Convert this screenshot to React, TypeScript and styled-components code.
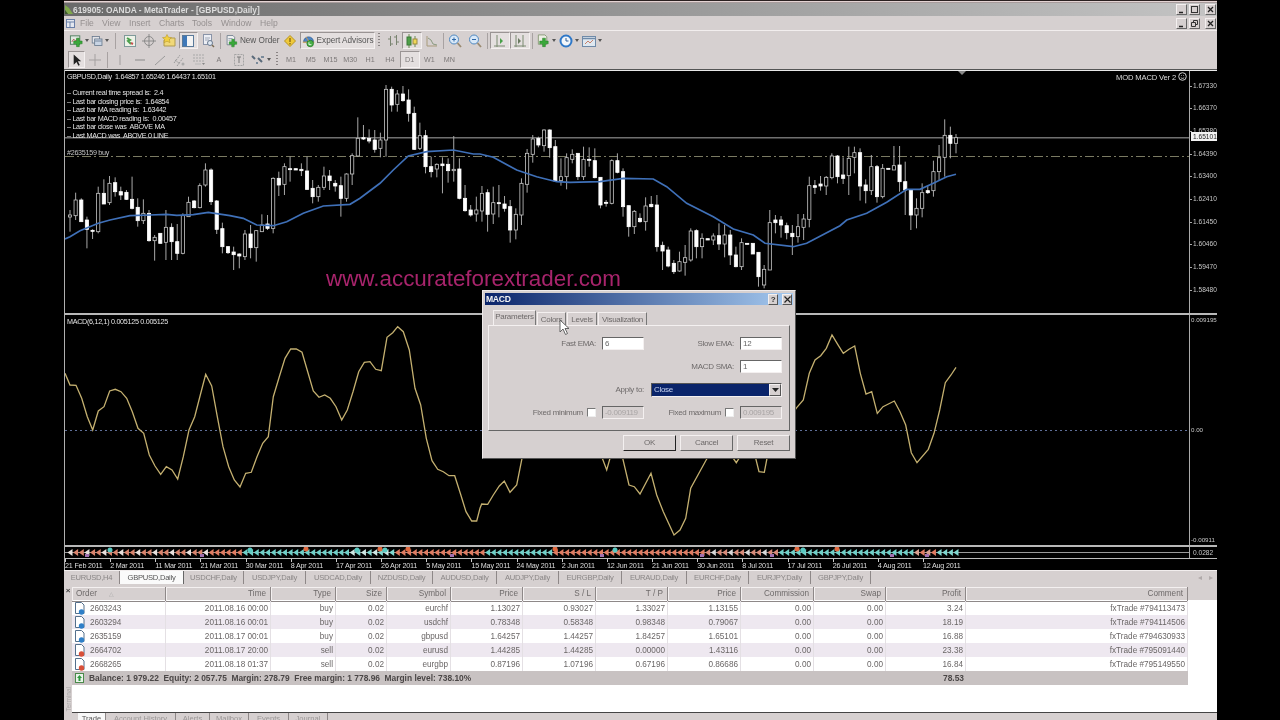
import React from "react";
import styled, { createGlobalStyle } from "styled-components";

const FACE = "#d6d0d0";
const FONT = `"Liberation Sans", Arial, sans-serif`;

// candles read off the chart, values are 3x pixels from y=70: high, low, body top, body bottom, filled
const CANDLES: number[][] = [
  [420,485,435,441,0],[368,450,390,437,0],[385,455,390,455,1],[440,535,450,478,1],[478,507,481,484,1],[350,490,370,485,0],
  [328,402,370,402,1],[318,405,340,398,0],[322,380,338,365,1],[350,390,365,375,1],[360,390,367,388,1],[320,418,388,415,1],
  [385,470,412,452,1],[388,462,430,452,0],[420,515,430,512,1],[495,572,502,512,0],[490,520,490,520,1],[420,570,472,517,0],
  [460,570,472,515,1],[462,570,515,550,1],[430,553,437,550,0],[380,440,397,440,0],[390,415,393,413,1],[340,415,347,413,0],
  [280,350,300,345,0],[295,405,300,395,1],[390,492,393,478,1],[458,550,476,530,1],[528,552,530,548,1],[530,600,546,554,1],
  [550,595,552,558,1],[480,570,492,560,0],[465,565,492,533,1],[480,575,482,533,0],[433,485,465,485,0],[435,480,462,475,1],
  [322,490,325,475,0],[305,378,325,345,1],[280,375,290,343,0],[260,335,296,298,1],[296,300,296,300,1],[280,318,298,302,1],
  [260,360,303,358,1],[330,400,355,380,1],[345,395,352,380,0],[290,360,318,352,0],[300,360,318,332,1],[330,365,340,348,1],
  [320,440,347,385,1],[310,395,312,385,0],[250,345,257,312,0],[142,260,205,258,0],[165,210,203,207,1],[178,220,205,213,1],
  [180,248,210,238,1],[188,262,210,235,0],[45,260,58,210,0],[50,125,58,105,1],[60,125,72,103,0],[48,95,72,92,1],
  [58,155,90,130,1],[110,240,130,238,1],[158,240,197,235,0],[180,310,197,290,1],[260,322,290,305,1],[280,322,283,297,0],
  [262,370,282,287,1],[265,338,283,302,1],[198,335,298,302,0],[265,388,297,385,1],[345,425,385,422,1],[405,440,420,435,1],
  [380,455,420,432,0],
  [348,455,370,423,0],[358,485,368,433,1],[350,462,398,432,0],[345,442,398,400,1],[378,425,402,415,1],[390,518,410,480,1],
  [415,508,433,480,0],[325,465,340,435,0],[237,368,250,343,0],[195,278,207,253,0],[200,232,205,225,1],[178,245,180,227,0],
  [178,263,180,233,1],[210,335,230,333,1],[265,347,320,332,0],[250,358,263,320,0],[238,280,253,268,0],[250,330,250,320,1],
  [230,330,268,320,0],[232,290,268,270,1],[235,325,272,323,1],[322,415,322,405,1],[390,410,397,399,1],[268,403,272,400,0],
  [250,310,272,307,1],[295,440,305,410,1],[407,500,407,470,1],[420,492,424,470,0],[430,458,445,455,1],[382,482,408,455,0],
  [378,412,403,410,1],[375,545,405,530,1],[515,600,526,543,1],[530,592,540,588,1],[570,612,580,605,1],[545,605,575,603,0],
  [525,617,563,577,0],[475,575,483,570,0],[478,565,482,530,1],[490,565,505,530,0],[506,510,506,510,1],[490,525,498,510,0],
  [460,540,497,522,1],[465,562,495,522,0],[480,585,495,555,1],[530,592,555,590,1],[505,600,518,590,0],[520,523,520,523,1],
  [520,552,520,552,1],[547,650,547,620,1],[585,655,598,645,0],[420,600,458,600,0],[435,490,450,458,1],[438,503,450,465,1],
  [458,508,467,488,1],[465,555,490,500,1],[432,518,470,500,0],[432,510,447,472,0],[320,472,347,448,0],[330,372,347,352,1],
  [318,362,342,348,1],[318,375,322,348,0],[250,328,258,323,0],[255,340,258,320,1],
  [262,342,315,325,1],[230,375,265,317,0],[230,310,248,262,0],[235,392,248,348,1],[328,400,345,362,1],[255,375,290,362,0],
  [285,398,290,380,1],[282,385,295,380,0],[295,297,295,297,1],[228,300,287,300,0],[228,365,285,335,1],[275,435,335,360,1],
  [360,480,360,435,1],[385,475,415,435,0],[340,442,368,415,0],[345,372,362,368,1],[272,380,305,362,0],[225,332,263,305,0],
  [148,320,196,262,0],[170,265,196,220,1],[192,250,203,220,0],
];

const BAR_STEP = (956 - 70) / (CANDLES.length - 1);

const scale = (pts: number[], ox: number, oy: number) => {
  const out: string[] = [];
  for (let i = 0; i < pts.length; i += 2) {
    out.push(`${(pts[i] / 3 + ox).toFixed(1)},${(pts[i + 1] / 3 + oy).toFixed(1)}`);
  }
  return out.join(" ");
};

const MA_LINE = [
  scale([15,507,30,500,60,482,115,460,150,450,210,437,270,435,320,433,350,436,400,434,445,427,510,437,550,445,590,465,640,467,680,455,730,430,790,408,870,403,900,385,960,340,1000,300,1045,258,1100,245,1180,240,1240,252], 60, 70),
  scale([120,252,160,262,230,300,290,320,350,335,390,337,480,335,550,325,640,327,680,350,740,400,820,440,880,477,940,495,975,520,1060,530,1100,520,1200,467], 440, 70),
  scale([200,450,260,430,320,397,380,358,420,358,460,340,500,320,528,313], 780, 70),
].join(" ");

const MACD_LINE = [
  scale([15,190,30,225,48,226,65,265,82,320,98,360,115,303,132,290,149,243,166,238,183,245,200,265,217,305,234,355,251,370,268,435,285,468,302,493,319,470,336,480,353,507,370,440,387,360,404,320,421,255,437,193,455,228,472,320,489,410,506,470,523,510,540,531,557,490,574,487,591,440,608,400,625,380,640,260,658,200,675,145,692,117,709,117,726,127,743,185,760,243,777,262,794,255,811,265,828,290,845,330,862,300,879,245,896,185,913,157,930,155,947,178,964,182,981,82,998,68,1013,50,1030,65,1048,120,1065,235,1082,285,1099,385,1116,452,1133,478,1150,485,1167,497,1184,497,1201,550,1218,605,1235,633,1250,633,1260,595], 60, 310),
  scale([125,582,143,583,160,555,178,528,193,513,210,547,230,525,246,445,270,300,350,300,470,400,487,445,500,480,510,445,530,420,548,445,567,525,583,530,600,552,633,490,650,555,670,605,702,675,720,660,737,625,752,535,800,447,840,400,880,445,889,458,897,445,920,420,947,445,957,485,973,487,981,445,1030,350,1070,293], 440, 310),
  scale([70,270,88,190,105,150,122,137,139,115,156,75,173,103,190,130,207,118,224,108,241,190,258,252,275,245,292,310,309,290,343,273,360,305,377,345,394,428,411,458,445,418,462,370,479,300,496,218,513,195,528,172], 780, 310),
].join(" ");

const markerColor = (x: number, i: number) => {
  if (x < 207) return i % 3 === 0 ? "#e8e0dc" : "#d9836c";
  if (x < 237) return "#e07c62";
  if (x < 347) return "#6fd0c8";
  if (x < 393) return i % 2 ? "#7fd8d0" : "#cfe8e4";
  if (x < 480) return "#e07c62";
  if (x < 548) return "#6fd0c8";
  if (x < 705) return "#e07c62";
  if (x < 773) return i % 3 ? "#d88a78" : "#d8d8d8";
  if (x < 910) return "#6fd0c8";
  if (x < 935) return i % 2 ? "#e07c62" : "#d8a090";
  return "#7fd8d0";
};

const TABS = [
  { label: "EURUSD,H4", w: 56 },
  { label: "GBPUSD,Daily", w: 64, active: true },
  { label: "USDCHF,Daily", w: 60 },
  { label: "USDJPY,Daily", w: 62 },
  { label: "USDCAD,Daily", w: 65 },
  { label: "NZDUSD,Daily", w: 62 },
  { label: "AUDUSD,Daily", w: 64 },
  { label: "AUDJPY,Daily", w: 62 },
  { label: "EURGBP,Daily", w: 63 },
  { label: "EURAUD,Daily", w: 65 },
  { label: "EURCHF,Daily", w: 62 },
  { label: "EURJPY,Daily", w: 62 },
  { label: "GBPJPY,Daily", w: 60 },
];

const DATES = [
  "21 Feb 2011","2 Mar 2011","11 Mar 2011","21 Mar 2011","30 Mar 2011","8 Apr 2011","17 Apr 2011","26 Apr 2011","5 May 2011","15 May 2011",
  "24 May 2011","2 Jun 2011","12 Jun 2011","21 Jun 2011","30 Jun 2011","8 Jul 2011","17 Jul 2011","26 Jul 2011","4 Aug 2011","12 Aug 2011",
];

const PRICES = ["1.67330","1.66370","1.65380","1.64390","1.63400","1.62410","1.61450","1.60460","1.59470","1.58480"];

const COLS = "94px 105px 65px 51px 64px 72px 73px 72px 73px 73px 72px 80px 222px";

const HEADERS = ["Order","Time","Type","Size","Symbol","Price","S / L","T / P","Price","Commission","Swap","Profit","Comment"];

const ORDERS = [
  ["2603243","2011.08.16 00:00","buy","0.02","eurchf","1.13027","0.93027","1.33027","1.13155","0.00","0.00","3.24","fxTrade #794113473"],
  ["2603294","2011.08.16 00:01","buy","0.02","usdchf","0.78348","0.58348","0.98348","0.79067","0.00","0.00","18.19","fxTrade #794114506"],
  ["2635159","2011.08.17 00:01","buy","0.02","gbpusd","1.64257","1.44257","1.84257","1.65101","0.00","0.00","16.88","fxTrade #794630933"],
  ["2664702","2011.08.17 20:00","sell","0.02","eurusd","1.44285","1.44285","0.00000","1.43116","0.00","0.00","23.38","fxTrade #795091440"],
  ["2668265","2011.08.18 01:37","sell","0.02","eurgbp","0.87196","1.07196","0.67196","0.86686","0.00","0.00","16.84","fxTrade #795149550"],
];

const STATS = [
  "– Current real time spread is:  2.4",
  "– Last bar closing price is:  1.64854",
  "– Last bar MA reading is:  1.63442",
  "– Last bar MACD reading is:  0.00457",
  "– Last bar close was  ABOVE MA",
  "– Last MACD was  ABOVE 0 LINE",
];

const I = ({ children, w = 16 }: { children: React.ReactNode; w?: number }) => (
  <svg width={w} height="16" viewBox={`0 0 ${w} 16`} fill="none">{children}</svg>
);

const Plus = ({ x = 8, y = 7 }: { x?: number; y?: number }) => (
  <path d={`M${x} ${y - 2}h3v3h3v3h-3v3h-3v-3h-3v-3h3z`} fill="#3aa83a" stroke="#1e7a1e" strokeWidth=".5" />
);

const icons: Record<string, React.ReactNode> = {
  newChart: <I><rect x="1.5" y="2.5" width="10" height="9" fill="#dfe8e0" stroke="#4f7f5f" /><path d="M3 9l2-3 2 2 3-3" stroke="#b05050" /><Plus x={8} y={7} /></I>,
  profiles: <I><rect x="1.5" y="2.5" width="9" height="8" fill="#e4e4e8" stroke="#66788c" /><rect x="4.5" y="5.5" width="9" height="8" fill="#c8d4e4" stroke="#66788c" /><path d="M5 8h8" stroke="#66788c" /></I>,
  market: <I><rect x="2.5" y="2.5" width="11" height="11" fill="#eef2e8" stroke="#7f9a9a" /><path d="M5 5l3 2-2 1 3 3" stroke="#4da04d" strokeWidth="2" /><path d="M9 10l2 1" stroke="#c85050" strokeWidth="2" /></I>,
  crosshair: <I><circle cx="8" cy="8" r="4.5" stroke="#8a8a8a" /><path d="M8 1v14M1 8h14" stroke="#8a8a8a" /></I>,
  navigator: <I><path d="M3 7h5l1-2h5v8H3z" fill="#f0d878" stroke="#b09a50" /><path d="M6 1.500l1.500 2.800 3 .3-2.200 2 .7 3L6 8.200l-3 1.400.7-3-2.200-2 3-.3z" fill="#f2d040" stroke="#b89a30" strokeWidth=".6" /></I>,
  terminal: <I><rect x="2.5" y="2.5" width="11" height="11" fill="#f4f4f4" stroke="#5a7a9a" /><rect x="3" y="3" width="4" height="10" fill="#3f78b8" /></I>,
  tester: <I><rect x="3.5" y="1.5" width="8" height="10" fill="#eceef4" stroke="#8a94a8" /><path d="M5 5h5M5 7h4" stroke="#a0a8b8" /><circle cx="10" cy="10" r="2.5" fill="#dfe8f2" stroke="#6a7a90" /><path d="M12 12l2 2" stroke="#7a6a50" strokeWidth="1.5" /></I>,
  order: <I><path d="M2.500 1.500h7l2 2v9h-9z" fill="#f2f2f2" stroke="#6a7a8a" /><path d="M4 5h5M4 7h3" stroke="#8a9aaa" /><Plus x={8} y={8} /></I>,
  alert: <I><path d="M8 2.500l5.500 5.500L8 13.500 2.500 8z" fill="#efc93a" stroke="#b89420" /><path d="M8 5v4M8 10v1.500" stroke="#7a5a10" strokeWidth="1.200" /></I>,
  expert: <I><path d="M2 9a6 6 0 0 1 12 0z" fill="#4f86c6" stroke="#2f5f96" /><path d="M1 9.500h14" stroke="#c8a060" strokeWidth="1.500" /><circle cx="10" cy="11" r="4" fill="#48b048" stroke="#2a7a2a" /><path d="M8.500 9.500v3h3" stroke="#fff" /><path d="M5 3l3 5" stroke="#d89a40" /></I>,
  bars: <I><path d="M5.500 3v10M3 6h2.500M5.500 11H8M11.500 2v10M9 4h2.500M11.500 9H14" stroke="#7a8470" /></I>,
  candles: <I><path d="M5 1v14M11 3v11" stroke="#6a8a50" /><rect x="3" y="4" width="4" height="8" fill="#4fa048" stroke="#3a7a38" /><rect x="9" y="6" width="4" height="5" fill="#f0d858" stroke="#9a8a40" /></I>,
  line: <I><path d="M3 3v10h10" stroke="#a89a7a" /><path d="M4 5l3 2 2 4 4 1" stroke="#8a9a80" /></I>,
  zoomIn: <I><circle cx="7" cy="6.500" r="4.500" fill="#d8e8f8" stroke="#4f88c0" /><path d="M5 6.500h4M7 4.500v4" stroke="#2f68a8" /><path d="M10.500 10l3.500 4" stroke="#9a8a70" strokeWidth="1.800" /></I>,
  zoomOut: <I><circle cx="7" cy="6.500" r="4.500" fill="#d8e8f8" stroke="#4f88c0" /><path d="M5 6.500h4" stroke="#2f68a8" /><path d="M10.500 10l3.500 4" stroke="#9a8a70" strokeWidth="1.800" /></I>,
  scroll: <I><path d="M5 2v12M2 13h11" stroke="#7a8a70" /><path d="M8 5l3 3-3 3z" fill="#48a048" /></I>,
  shift: <I><path d="M4 2v12M11 2v12M2 13h12" stroke="#7a8a70" /><path d="M6 5l3 3-3 3z" fill="#6a7a60" /></I>,
  indicator: <I><path d="M2.500 1.500h7l2 2v8h-9z" fill="#eceee4" stroke="#8a9a7a" /><Plus x={7} y={7} /></I>,
  periods: <I><circle cx="8" cy="8" r="5.500" fill="#f2f6fa" stroke="#2f78c8" strokeWidth="2" /><path d="M8 5v3h2.500" stroke="#2f5f96" /></I>,
  templates: <I><rect x="1.500" y="3.500" width="13" height="10" fill="#dfe8f0" stroke="#6f8aa8" /><path d="M2 5.500h12" stroke="#6f8aa8" strokeWidth="1.500" /><path d="M4 11l3-3 2 2 3-3" stroke="#c8806a" /></I>,
  arrow: <I><path d="M5 2v11l3-3 2 4 1.500-.7-2-4H13z" fill="#222" /></I>,
  cross: <I><path d="M8 2v12M2 8h12" stroke="#a4a0a0" /></I>,
  vline: <I><path d="M8 3v10" stroke="#a09c9c" /></I>,
  hline: <I><path d="M3 8h10" stroke="#8a8a8a" /></I>,
  trend: <I><path d="M3 13l10-9" stroke="#9a9a9a" /></I>,
  channel: <I><path d="M3 11l6-8M6 14l6-8M4 8l5 4" stroke="#9a9a9a" strokeDasharray="2 1" /><circle cx="12" cy="12" r="1.500" fill="#aaa" /></I>,
  fibo: <I><path d="M2 3h12M2 6h12M2 9h12" stroke="#a8a8a8" strokeDasharray="2 1" /><path d="M4 12h6" stroke="#b8b8b8" /><path d="M11 11h3l-1.500 2z" fill="#888" /></I>,
  frame: <I><rect x="3.500" y="2.500" width="9" height="11" stroke="#a4a4a4" strokeDasharray="2 1" /><path d="M6 5h4M8 5v6" stroke="#7a7a7a" /></I>,
  arrows: <I><path d="M2 4l3 3M8 6l4 4" stroke="#5a6a7a" strokeWidth="2" /><path d="M11 5h3" stroke="#7a8a9a" strokeWidth="2" /><path d="M6 11h2" stroke="#7a8a9a" strokeWidth="2" /></I>,
};

const ROW_ONE: { icon?: string; w: number; caret?: boolean; active?: boolean; sep?: boolean; grip?: boolean; label?: string }[] = [
  { icon: "newChart", w: 22, caret: true },
  { icon: "profiles", w: 20, caret: true },
  { sep: true, w: 10 },
  { icon: "market", w: 19.5 },
  { icon: "crosshair", w: 19.5 },
  { icon: "navigator", w: 19.5 },
  { icon: "terminal", w: 19.5, active: true },
  { icon: "tester", w: 19.5 },
  { sep: true, w: 5 },
  { icon: "order", w: 58, label: "New Order" },
  { icon: "alert", w: 19 },
  { icon: "expert", w: 75, label: "Expert Advisors", active: true },
  { grip: true, w: 9 },
  { icon: "bars", w: 18 },
  { icon: "candles", w: 20, active: true },
  { icon: "line", w: 20 },
  { sep: true, w: 3 },
  { icon: "zoomIn", w: 20 },
  { icon: "zoomOut", w: 20 },
  { sep: true, w: 5 },
  { icon: "scroll", w: 20, active: true },
  { icon: "shift", w: 20, active: true },
  { sep: true, w: 5 },
  { icon: "indicator", w: 22, caret: true },
  { icon: "periods", w: 23, caret: true },
  { icon: "templates", w: 24, caret: true },
];

const ROW_TWO: typeof ROW_ONE = [
  { icon: "arrow", w: 17, active: true },
  { icon: "cross", w: 20 },
  { sep: true, w: 5 },
  { icon: "vline", w: 20 },
  { icon: "hline", w: 20 },
  { icon: "trend", w: 19 },
  { icon: "channel", w: 20 },
  { icon: "fibo", w: 20 },
  { label: "A", w: 20 },
  { icon: "frame", w: 20 },
  { icon: "arrows", w: 23, caret: true },
  { grip: true, w: 9 },
  { label: "M1", w: 19.8 },
  { label: "M5", w: 19.8 },
  { label: "M15", w: 19.8 },
  { label: "M30", w: 19.8 },
  { label: "H1", w: 19.8 },
  { label: "H4", w: 19.8 },
  { label: "D1", w: 19.8, active: true },
  { label: "W1", w: 19.8 },
  { label: "MN", w: 19.8 },
];

const App = () => (
  <Page>
    <GlobalStyle />
    <TopEdge />
    <TitleBar>
      <svg width="9" height="13" viewBox="0 0 9 13"><path d="M0 2l4 3 4 6H3L0 7z" fill="#7fa84a" /><path d="M0 7l3 4H0z" fill="#3c5a2a" /></svg>
      <TitleText>619905: OANDA - MetaTrader - [GBPUSD,Daily]</TitleText>
      <WinButtons>
        <WinButton><svg width="9" height="9"><path d="M2 7.500h4" stroke="#222" strokeWidth="1.500" /></svg></WinButton>
        <WinButton><svg width="9" height="9"><rect x="1.500" y="1.500" width="6" height="6" fill="none" stroke="#333" /></svg></WinButton>
        <WinButton $gap><svg width="9" height="9"><path d="M2 2l5 5M7 2l-5 5" stroke="#222" strokeWidth="1.300" /></svg></WinButton>
      </WinButtons>
    </TitleBar>
    <MenuBar>
      <svg width="9" height="11" viewBox="0 0 9 11"><rect x=".5" y="1.500" width="8" height="8" fill="#e4e8f0" stroke="#6a80a8" /><path d="M1 4h7M4 4v5" stroke="#6a80a8" /></svg>
      <MenuItem $w={22}>File</MenuItem>
      <MenuItem $w={27}>View</MenuItem>
      <MenuItem $w={30}>Insert</MenuItem>
      <MenuItem $w={33}>Charts</MenuItem>
      <MenuItem $w={29}>Tools</MenuItem>
      <MenuItem $w={39}>Window</MenuItem>
      <MenuItem $w={24}>Help</MenuItem>
      <WinButtons>
        <WinButton><svg width="9" height="9"><path d="M2 7.500h4" stroke="#222" strokeWidth="1.500" /></svg></WinButton>
        <WinButton><svg width="9" height="9"><path d="M3.500 3V1.500h4v4H6M1.500 3.500h4v4h-4z" fill="none" stroke="#333" /></svg></WinButton>
        <WinButton $gap><svg width="9" height="9"><path d="M2 2l5 5M7 2l-5 5" stroke="#222" strokeWidth="1.300" /></svg></WinButton>
      </WinButtons>
    </MenuBar>
    <Toolbar>
      {ROW_ONE.map((t, i) => <ToolSlot key={i} tool={t} />)}
    </Toolbar>
    <Toolbar>
      {ROW_TWO.map((t, i) => <ToolSlot key={i} tool={t} small />)}
    </Toolbar>

    <Chart>
      <Pane $h={242}>
        <Plot>
          <svg width="1124" height="242" viewBox="65 71 1124 242" style={{ display: "block" }}>
            <line x1="65" x2="1189" y1="137.700" y2="137.700" stroke="#707070" strokeWidth="1.500" />
            <line x1="65" x2="1189" y1="156.500" y2="156.500" stroke="#7a7a62" strokeDasharray="9 3 2 3" />
            {CANDLES.map((c, i) => {
              const x = 70 + i * BAR_STEP;
              const top = 70 + c[2] / 3;
              const h = Math.max((c[3] - c[2]) / 3, 1);
              return (
                <g key={i}>
                  <line x1={x} x2={x} y1={70 + c[0] / 3} y2={70 + c[1] / 3} stroke="#a8a8a8" />
                  <rect x={x - 1.6} y={top} width="3.2" height={h} fill={c[4] ? "#fff" : "#000"} stroke={c[4] ? "#fff" : "#c8c8c8"} strokeWidth=".8" />
                </g>
              );
            })}
            <polyline points={MA_LINE} fill="none" stroke="#3f70b8" strokeWidth="1.700" />
          </svg>
          <InfoText $top={1}>GBPUSD,Daily&nbsp; 1.64857 1.65246 1.64437 1.65101</InfoText>
          <StatsBlock>
            {STATS.map((s) => <div key={s}>{s}</div>)}
          </StatsBlock>
          <InfoText $top={77} $dim>#2635159 buy</InfoText>
          <ExpertName>MOD MACD Ver 2 <Smiley /></ExpertName>
          <ShiftMark />
          <Watermark>www.accurateforextrader.com</Watermark>
        </Plot>
        <PriceAxis>
          {PRICES.map((p) => <PriceLabel key={p}>{p}</PriceLabel>)}
          <CurrentPrice>1.65101</CurrentPrice>
        </PriceAxis>
      </Pane>
      <PaneDivider />
      <Pane $h={230}>
        <Plot>
          <svg width="1124" height="230" viewBox="65 315 1124 230" style={{ display: "block" }}>
            <line x1="65" x2="1189" y1="430.500" y2="430.500" stroke="#5f6f98" strokeDasharray="2 3" />
            <polyline points={MACD_LINE} fill="none" stroke="#c4b070" strokeWidth="1.300" />
          </svg>
          <InfoText $top={2}>MACD(6,12,1) 0.005125 0.005125</InfoText>
        </Plot>
        <MacdAxis>
          <span>0.009195</span>
          <span>0.00</span>
          <span>-0.00911</span>
        </MacdAxis>
      </Pane>
      <PaneDivider />
      <Pane $h={11}>
        <Plot>
          <svg width="1124" height="11" viewBox="65 547 1124 11" style={{ display: "block" }}>
            <line x1="65" x2="1189" y1="552.500" y2="552.500" stroke="#999" />
            {CANDLES.map((_, i) => {
              const x = 67.500 + i * BAR_STEP;
              return <path key={i} d={`M${x} 552.500l5-3.500v7z`} fill={markerColor(x, i)} />;
            })}
            {[306, 380, 408, 555, 797, 837].map((x) => <circle key={x} cx={x} cy="549" r="2.500" fill="#e0683e" />)}
            {[357, 385, 803, 110, 250, 615].map((x) => <circle key={x} cx={x} cy="550" r="2.500" fill="#58c8c0" />)}
            {[85, 200, 450, 600, 700, 770, 890, 925].map((x) => <rect key={x} x={x} y="554" width="4" height="3" fill="#a070b0" />)}
          </svg>
        </Plot>
        <StripAxis>0.0282</StripAxis>
      </Pane>
      <DateAxis>
        {DATES.map((d) => <DateCell key={d}>{d}</DateCell>)}
      </DateAxis>
    </Chart>

    <ChartTabs>
      {TABS.map((t) => <ChartTab key={t.label} $w={t.w} $active={t.active}>{t.label}</ChartTab>)}
      <TabArrows>◂&nbsp;&nbsp;&nbsp;▸</TabArrows>
    </ChartTabs>

    <Terminal>
      <Gutter>
        <CloseMark>×</CloseMark>
        <GutterLabel>Terminal</GutterLabel>
      </Gutter>
      <TerminalBody>
        <TableArea>
          <HeaderRow>
            {HEADERS.map((h, i) => <HeaderCell key={i} $first={i === 0}>{h}{i === 0 && <SortMark>△</SortMark>}</HeaderCell>)}
          </HeaderRow>
          {ORDERS.map((row, r) => (
            <OrderRow key={row[0]} $tint={r % 2 === 1}>
              {row.map((v, c) => (
                <Cell key={c} $first={c === 0}>
                  {c === 0 && <OrderIcon sell={row[2] === "sell"} />}
                  {v}
                </Cell>
              ))}
            </OrderRow>
          ))}
          <SummaryRow>
            <SummaryText>
              <svg width="9" height="10" viewBox="0 0 9 10"><rect x=".5" y=".5" width="8" height="9" fill="#eaf4ea" stroke="#4a8a4a" /><path d="M4.500 2l2.500 3H5.500v3h-2V5H2z" fill="#2f9a3f" /></svg>
              Balance: 1 979.22&nbsp; Equity: 2 057.75&nbsp; Margin: 278.79&nbsp; Free margin: 1 778.96&nbsp; Margin level: 738.10%
            </SummaryText>
            <SummaryProfit>78.53</SummaryProfit>
          </SummaryRow>
        </TableArea>
        <BottomTabs>
          <BottomTab $active $w={28}>Trade</BottomTab>
          <BottomTab $w={70}>Account History</BottomTab>
          <BottomTab $w={34}>Alerts</BottomTab>
          <BottomTab $w={39}>Mailbox</BottomTab>
          <BottomTab $w={40}>Events</BottomTab>
          <BottomTab $w={39}>Journal</BottomTab>
        </BottomTabs>
      </TerminalBody>
    </Terminal>

    <Dialog>
      <DialogTitle>
        MACD
        <DialogButtons>
          <TitleButton>?</TitleButton>
          <TitleButton $close><svg width="9" height="9"><path d="M1.500 1.500l6 6M7.500 1.500l-6 6" stroke="#222" strokeWidth="1.200" /></svg></TitleButton>
        </DialogButtons>
      </DialogTitle>
      <DialogTabs>
        <DialogTab $active $w={43}>Parameters</DialogTab>
        <DialogTab $w={29}>Colors</DialogTab>
        <DialogTab $w={30}>Levels</DialogTab>
        <DialogTab $w={49}>Visualization</DialogTab>
      </DialogTabs>
      <ParamPanel>
        <FieldLabel>Fast EMA:</FieldLabel>
        <Field>6</Field>
        <FieldLabel>Slow EMA:</FieldLabel>
        <Field>12</Field>

        <FieldLabel $span={3}>MACD SMA:</FieldLabel>
        <Field>1</Field>

        <FieldLabel $span={2}>Apply to:</FieldLabel>
        <SelectBox>
          <SelectValue>Close</SelectValue>
          <SelectArrow><svg width="7" height="4"><path d="M0 0h7L3.500 4z" fill="#222" /></svg></SelectArrow>
        </SelectBox>

        <FieldLabel>Fixed minimum<CheckBox /></FieldLabel>
        <Field $disabled>-0.009119</Field>
        <FieldLabel>Fixed maximum<CheckBox /></FieldLabel>
        <Field $disabled>0.009195</Field>
      </ParamPanel>
      <DialogActions>
        <ActionButton $default>OK</ActionButton>
        <ActionButton>Cancel</ActionButton>
        <ActionButton>Reset</ActionButton>
      </DialogActions>
    </Dialog>

    <MouseCursor width="12" height="17" viewBox="0 0 12 17">
      <path d="M1 1v12l3-3 2.500 5.500 2-1L6 9.500h4z" fill="#fff" stroke="#555" strokeWidth=".9" />
    </MouseCursor>
  </Page>
);

export default App;

const ToolSlot = ({ tool, small }: { tool: (typeof ROW_ONE)[number]; small?: boolean }) => {
  if (tool.sep) return <ToolSep $w={tool.w} />;
  if (tool.grip) return <ToolGrip $w={tool.w} />;
  return (
    <Tool $w={tool.w} $active={tool.active} $small={small}>
      {tool.icon && icons[tool.icon]}
      {tool.label && <span>{tool.label}</span>}
      {tool.caret && <Caret />}
    </Tool>
  );
};

const Smiley = () => (
  <svg width="9" height="9" viewBox="0 0 9 9" style={{ verticalAlign: "-1px" }}>
    <circle cx="4.500" cy="4.500" r="3.800" fill="none" stroke="#ccc" />
    <path d="M3 3.500h.6M5.400 3.500H6M2.800 5.500c1 1.200 2.400 1.200 3.400 0" stroke="#ccc" fill="none" />
  </svg>
);

const OrderIcon = ({ sell }: { sell: boolean }) => (
  <svg width="12" height="13" viewBox="0 0 12 13" style={{ marginRight: 4, flexShrink: 0 }}>
    <path d="M1.500 .5h6l2.500 2.500v8.500H1.500z" fill="#fff" stroke="#54708c" />
    <circle cx="7.500" cy="10" r="2.700" fill={sell ? "#d8503a" : "#2f7fc8"} />
  </svg>
);

const GlobalStyle = createGlobalStyle`
  html, body {
    margin: 0;
    padding: 0;
    height: 100%;
    background: #000;
    overflow: hidden;
  }
  #root {
    height: 720px;
  }
`;

const Page = styled.div`
  position: relative;
  display: flex;
  flex-direction: column;
  width: 1153px;
  height: 720px;
  margin-left: 64px;
  overflow: hidden;
  background: ${FACE};
  font-family: ${FONT};
  font-size: 8.2px;
  color: #666;
  filter: blur(0.35px);
`;

const TopEdge = styled.div`
  height: 3px;
  background: linear-gradient(#2a2020 1px, #e4d4d4 1px, #e4d4d4 2px, #a89c9c 2px);
`;

const TitleBar = styled.div`
  display: flex;
  align-items: center;
  height: 13px;
  padding-left: 1px;
  background: linear-gradient(90deg, #6a6a6a, #8e8e8e 40%, #c4c4c4);
`;

const TitleText = styled.span`
  margin-left: -1px;
  font-size: 8.4px;
  font-weight: bold;
  color: #dcdcdc;
  white-space: nowrap;
`;

const WinButtons = styled.div`
  display: flex;
  margin-left: auto;
  margin-right: 1px;
`;

const WinButton = styled.div<{ $gap?: boolean }>`
  display: flex;
  width: 9px;
  height: 9px;
  margin-left: ${(p) => (p.$gap ? "5px" : "2px")};
  background: ${FACE};
  border: 1px solid;
  border-color: #f4f0f0 #666 #666 #f4f0f0;
  box-sizing: content-box;
`;

const MenuBar = styled.div`
  display: flex;
  align-items: center;
  height: 14px;
  padding-left: 2px;
  border-bottom: 1px solid #f2eeee;
`;

const MenuItem = styled.span<{ $w: number }>`
  width: ${(p) => p.$w}px;
  flex-shrink: 0;
  color: #959090;
  font-size: 8.6px;
  &:first-of-type {
    margin-left: 5px;
  }
`;

const Toolbar = styled.div`
  display: flex;
  align-items: center;
  height: 19px;
  padding-left: 4px;
`;

const Tool = styled.div<{ $w: number; $active?: boolean; $small?: boolean }>`
  display: flex;
  align-items: center;
  justify-content: ${(p) => (p.$w > 30 ? "flex-start" : "center")};
  gap: ${(p) => (p.$w > 30 ? "2px" : "1px")};
  box-sizing: border-box;
  flex-shrink: 0;
  width: ${(p) => p.$w}px;
  height: 17px;
  padding-left: ${(p) => (p.$w > 30 ? "1px" : "0")};
  color: ${(p) => (p.$small ? "#7c7878" : "#555")};
  font-size: ${(p) => (p.$small ? "7.2px" : "8.2px")};
  background: ${(p) => (p.$active ? "#e4dfdf" : "transparent")};
  border: 1px solid;
  border-color: ${(p) => (p.$active ? "#9a9494 #f4f0f0 #f4f0f0 #9a9494" : "transparent")};
  white-space: nowrap;
`;

const Caret = styled.i`
  width: 0;
  height: 0;
  border-left: 2px solid transparent;
  border-right: 2px solid transparent;
  border-top: 3px solid #555;
`;

const ToolSep = styled.div<{ $w: number }>`
  flex-shrink: 0;
  width: ${(p) => p.$w}px;
  height: 16px;
  background: linear-gradient(#a8a2a2, #a8a2a2) center / 1px 100% no-repeat;
`;

const ToolGrip = styled.div<{ $w: number }>`
  flex-shrink: 0;
  width: ${(p) => p.$w}px;
  height: 15px;
  background: repeating-linear-gradient(#8a8484 0 1px, transparent 1px 3px) center / 2px 100% no-repeat;
`;

const Chart = styled.div`
  display: flex;
  flex-direction: column;
  height: 501px;
  box-sizing: border-box;
  padding-top: 1px;
  background: linear-gradient(#e8e8e8 1px, #000 1px);
  background-clip: padding-box;
  border-top: 1px solid #555;
  box-shadow: inset 1px 0 0 #b0b0b0;
  color: #ddd;
`;

const Pane = styled.div<{ $h: number }>`
  display: flex;
  flex-shrink: 0;
  height: ${(p) => p.$h}px;
`;

const Plot = styled.div`
  position: relative;
  width: 1124px;
  margin-left: 1px;
  flex-shrink: 0;
  overflow: hidden;
`;

const PaneDivider = styled.div`
  flex-shrink: 0;
  height: 2px;
  margin-left: 1px;
  background: #b8b8b8;
`;

const InfoText = styled.div<{ $top: number; $dim?: boolean }>`
  position: absolute;
  top: ${(p) => p.$top}px;
  left: 2px;
  font-size: 7.2px;
  letter-spacing: -0.3px;
  line-height: 10px;
  color: ${(p) => (p.$dim ? "#c4c4c4" : "#e4e4e4")};
  white-space: nowrap;
`;

const StatsBlock = styled.div`
  position: absolute;
  top: 18px;
  left: 2px;
  font-size: 7.2px;
  letter-spacing: -0.3px;
  line-height: 8.5px;
  color: #e4e4e4;
  white-space: pre;
`;

const ExpertName = styled.div`
  position: absolute;
  top: 1px;
  right: 2px;
  font-size: 7.6px;
  letter-spacing: -0.15px;
  line-height: 10px;
  color: #ddd;
`;

const ShiftMark = styled.div`
  position: absolute;
  top: 0;
  left: 893px;
  border-left: 4px solid transparent;
  border-right: 4px solid transparent;
  border-top: 4px solid #888;
`;

const Watermark = styled.div`
  position: absolute;
  top: 196px;
  left: 261px;
  font-size: 22.4px;
  line-height: 24px;
  color: #a8246c;
  white-space: nowrap;
`;

const PriceAxis = styled.div`
  position: relative;
  width: 28px;
  box-sizing: border-box;
  padding-top: 3.7px;
  border-left: 1px solid #aaa;
  overflow: hidden;
`;

const PriceLabel = styled.div`
  position: relative;
  height: 22.67px;
  line-height: 22.67px;
  padding-left: 3px;
  font-size: 6.6px;
  color: #c8c8c8;
  &::before {
    content: "";
    position: absolute;
    top: 11px;
    left: 0;
    width: 2px;
    height: 1px;
    background: #aaa;
  }
`;

const CurrentPrice = styled.div`
  position: absolute;
  top: 61px;
  left: 1px;
  width: 26px;
  height: 9px;
  padding-left: 2px;
  box-sizing: border-box;
  line-height: 9px;
  font-size: 6.6px;
  color: #222;
  background: #f2f2f2;
`;

const MacdAxis = styled.div`
  display: flex;
  flex-direction: column;
  justify-content: space-between;
  width: 28px;
  box-sizing: border-box;
  padding-left: 1px;
  border-left: 1px solid #aaa;
  font-size: 6.2px;
  line-height: 10px;
  color: #c8c8c8;
  white-space: nowrap;
`;

const StripAxis = styled.div`
  width: 28px;
  box-sizing: border-box;
  padding-left: 3px;
  border-left: 1px solid #aaa;
  font-size: 6.6px;
  line-height: 11px;
  color: #c8c8c8;
`;

const DateAxis = styled.div`
  display: flex;
  flex: 1;
  border-top: 1px solid #bbb;
  margin-left: 1px;
`;

const DateCell = styled.div`
  position: relative;
  flex-shrink: 0;
  width: 45.17px;
  padding-top: 2px;
  font-size: 7.2px;
  letter-spacing: -0.2px;
  line-height: 10px;
  color: #ddd;
  white-space: nowrap;
  &::before {
    content: "";
    position: absolute;
    top: 0;
    left: 0;
    width: 1px;
    height: 3px;
    background: #ccc;
  }
`;

const ChartTabs = styled.div`
  display: flex;
  align-items: flex-start;
  height: 16px;
  box-sizing: border-box;
  border-top: 1px solid #f2eeee;
`;

const ChartTab = styled.div<{ $w: number; $active?: boolean }>`
  display: flex;
  align-items: center;
  justify-content: center;
  box-sizing: border-box;
  flex-shrink: 0;
  width: ${(p) => p.$w}px;
  height: 13px;
  font-size: 7.6px;
  letter-spacing: -0.25px;
  color: ${(p) => (p.$active ? "#555" : "#8a8686")};
  background: ${(p) => (p.$active ? "#fafafa" : "transparent")};
  border-right: 1px solid ${(p) => (p.$active ? "#666" : "#8e8888")};
`;

const TabArrows = styled.div`
  margin-left: auto;
  margin-right: 4px;
  line-height: 13px;
  font-size: 8px;
  color: #b0aaaa;
`;

const Terminal = styled.div`
  display: flex;
  flex: 1;
  min-height: 0;
`;

const Gutter = styled.div`
  display: flex;
  flex-direction: column;
  justify-content: space-between;
  align-items: center;
  width: 8px;
  flex-shrink: 0;
  padding-bottom: 8px;
  box-sizing: border-box;
`;

const CloseMark = styled.span`
  font-size: 8px;
  line-height: 10px;
  font-weight: bold;
  color: #444;
`;

const GutterLabel = styled.span`
  writing-mode: vertical-rl;
  transform: rotate(180deg);
  font-size: 6.5px;
  color: #a8a4a4;
`;

const TerminalBody = styled.div`
  display: flex;
  flex-direction: column;
  flex: 1;
  min-width: 0;
`;

const TableArea = styled.div`
  flex: 1;
  padding-top: 1px;
  background: linear-gradient(${FACE} 14px, #fff 14px);
  border-bottom: 1px solid #444;
`;

const HeaderRow = styled.div`
  display: grid;
  grid-template-columns: ${COLS};
  width: 1116px;
  height: 14px;
`;

const HeaderCell = styled.div<{ $first?: boolean }>`
  box-sizing: border-box;
  padding: ${(p) => (p.$first ? "0 0 0 4px" : "0 4px 0 0")};
  text-align: ${(p) => (p.$first ? "left" : "right")};
  line-height: 13px;
  color: #6e6a6a;
  border: 1px solid;
  border-width: 0 1px 1px 0;
  border-color: #8e8888;
  box-shadow: inset 1px 1px 0 #f4f0f0;
  white-space: nowrap;
`;

const SortMark = styled.span`
  margin-left: 12px;
  font-size: 6px;
  color: #aaa;
`;

const OrderRow = styled.div<{ $tint?: boolean }>`
  display: grid;
  grid-template-columns: ${COLS};
  width: 1116px;
  height: 14px;
  background: ${(p) => (p.$tint ? "#eee8f0" : "#fff")};
`;

const Cell = styled.div<{ $first?: boolean }>`
  display: flex;
  align-items: center;
  justify-content: ${(p) => (p.$first ? "flex-start" : "flex-end")};
  box-sizing: border-box;
  padding: ${(p) => (p.$first ? "0 0 0 2px" : "0 2px 0 0")};
  border-right: 1px solid #e4e0e4;
  letter-spacing: ${(p) => (p.$first ? "-0.1px" : "0")};
  color: #6a6666;
  white-space: nowrap;
`;

const SummaryRow = styled.div`
  position: relative;
  display: flex;
  align-items: center;
  width: 1116px;
  height: 14px;
  background: #c8c2c2;
  font-weight: bold;
  font-size: 8.4px;
  color: #4a4646;
`;

const SummaryText = styled.div`
  display: flex;
  align-items: center;
  gap: 5px;
  padding-left: 3px;
  white-space: nowrap;
`;

const SummaryProfit = styled.div`
  position: absolute;
  right: 224px;
`;

const BottomTabs = styled.div`
  display: flex;
  flex-shrink: 0;
  height: 7px;
  padding-left: 6px;
  overflow: hidden;
`;

const BottomTab = styled.div<{ $w: number; $active?: boolean }>`
  flex-shrink: 0;
  box-sizing: border-box;
  width: ${(p) => p.$w}px;
  line-height: 11px;
  text-align: center;
  font-size: 7.6px;
  color: ${(p) => (p.$active ? "#555" : "#9a9696")};
  background: ${(p) => (p.$active ? "#f8f8f8" : "transparent")};
  border-right: 1px solid #8e8888;
  white-space: nowrap;
`;

const Dialog = styled.div`
  position: absolute;
  top: 290px;
  left: 418px;
  display: flex;
  flex-direction: column;
  width: 314px;
  height: 169px;
  box-sizing: border-box;
  padding: 2px;
  background: ${FACE};
  border: 1px solid;
  border-color: #eeeaea #555 #555 #eeeaea;
  font-size: 8px;
  letter-spacing: -0.3px;
  color: #6e6a6a;
`;

const DialogTitle = styled.div`
  position: relative;
  display: flex;
  align-items: center;
  flex-shrink: 0;
  height: 12px;
  padding-left: 1px;
  background: linear-gradient(90deg, #0a246a, #a6caf0);
  font-size: 8.6px;
  font-weight: bold;
  color: #f4f4f4;
`;

const DialogButtons = styled.div`
  position: absolute;
  top: 1px;
  right: 1px;
  display: flex;
  gap: 4px;
`;

const TitleButton = styled.div<{ $close?: boolean }>`
  display: flex;
  align-items: center;
  justify-content: center;
  width: 8px;
  height: 9px;
  background: ${FACE};
  border: 1px solid;
  border-color: #f4f0f0 #555 #555 #f4f0f0;
  color: #333;
  font-size: 8px;
`;

const DialogTabs = styled.div`
  display: flex;
  align-items: flex-end;
  flex-shrink: 0;
  height: 20px;
  padding-left: 7px;
`;

const DialogTab = styled.div<{ $w: number; $active?: boolean }>`
  box-sizing: border-box;
  width: ${(p) => p.$w}px;
  height: ${(p) => (p.$active ? "15px" : "13px")};
  line-height: ${(p) => (p.$active ? "12px" : "13px")};
  margin-left: 1px;
  text-align: center;
  border-top: 1px solid #f4f0f0;
  border-left: 1px solid #f4f0f0;
  border-right: 1px solid #777;
  white-space: nowrap;
`;

const ParamPanel = styled.div`
  display: grid;
  grid-template-columns: 107px 42px 84px 42px;
  grid-auto-rows: 13px;
  column-gap: 6px;
  row-gap: 10px;
  align-content: start;
  box-sizing: border-box;
  height: 106px;
  margin: 0 3px;
  padding-top: 11px;
  border: 1px solid;
  border-color: #f4f0f0 #666 #666 #f4f0f0;
`;

const FieldLabel = styled.div<{ $span?: number }>`
  display: flex;
  align-items: center;
  justify-content: flex-end;
  grid-column: span ${(p) => p.$span || 1};
  white-space: nowrap;
`;

const Field = styled.div<{ $disabled?: boolean }>`
  box-sizing: border-box;
  height: 13px;
  padding-left: 2px;
  line-height: 11px;
  background: ${(p) => (p.$disabled ? FACE : "#fff")};
  color: ${(p) => (p.$disabled ? "#a8a4a4" : "#666")};
  border: 1px solid;
  border-color: #666 #f4f0f0 #f4f0f0 #666;
`;

const SelectBox = styled.div`
  grid-column: span 2;
  display: flex;
  box-sizing: border-box;
  width: 131px;
  height: 14px;
  margin-left: 1px;
  border: 1px solid;
  border-color: #555 #f4f0f0 #f4f0f0 #555;
`;

const SelectValue = styled.div`
  flex: 1;
  padding-left: 2px;
  line-height: 12px;
  background: #0a246a;
  color: #c8d4f0;
`;

const SelectArrow = styled.div`
  display: flex;
  align-items: center;
  justify-content: center;
  box-sizing: border-box;
  width: 12px;
  background: ${FACE};
  border: 1px solid;
  border-color: #f4f0f0 #555 #555 #f4f0f0;
`;

const CheckBox = styled.i`
  flex-shrink: 0;
  box-sizing: border-box;
  width: 9px;
  height: 9px;
  margin-left: 4px;
  background: #fff;
  border: 1px solid;
  border-color: #777 #eee #eee #777;
`;

const DialogActions = styled.div`
  display: flex;
  justify-content: flex-end;
  gap: 4px;
  flex-shrink: 0;
  margin-top: 4px;
  padding-right: 3px;
`;

const ActionButton = styled.div<{ $default?: boolean }>`
  box-sizing: border-box;
  width: 53px;
  height: 16px;
  line-height: 14px;
  text-align: center;
  border: 1px solid;
  border-color: ${(p) => (p.$default ? "#f4f0f0 #222 #222 #f4f0f0" : "#f4f0f0 #666 #666 #f4f0f0")};
`;

const MouseCursor = styled.svg`
  position: absolute;
  top: 319px;
  left: 495px;
`;
